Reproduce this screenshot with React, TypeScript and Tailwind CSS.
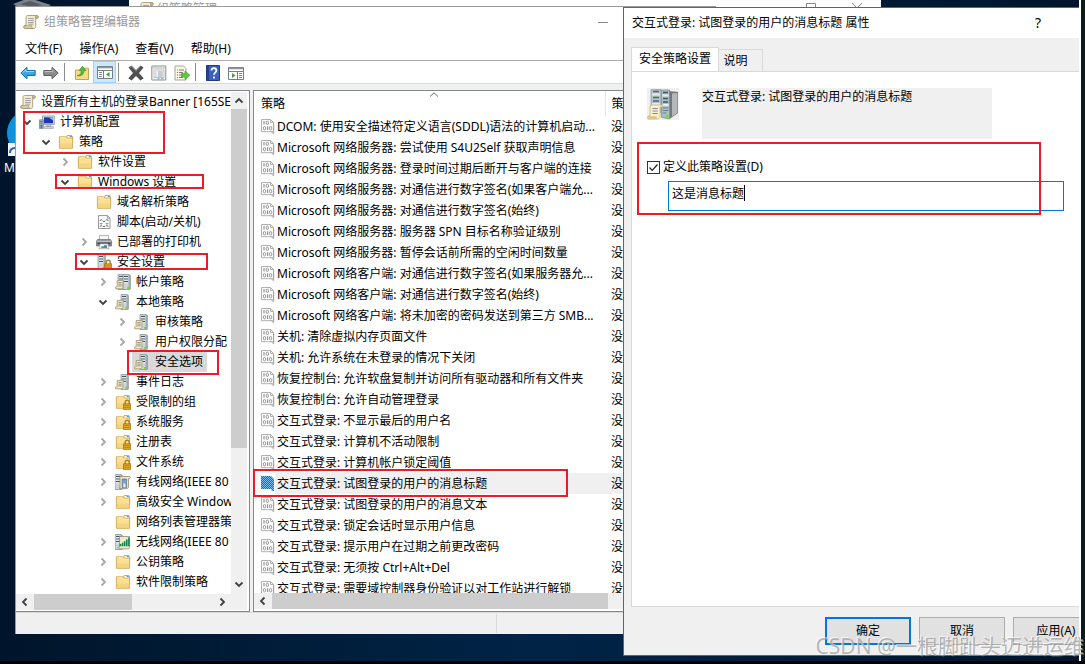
import type { ReactNode } from "react";

type IconName =
  | "folder"
  | "folderLock"
  | "computer"
  | "script"
  | "printer"
  | "serverLock"
  | "server"
  | "servers"
  | "wired"
  | "wireless";

type TreeNode = {
  label: string;
  icon: IconName;
  open?: boolean;
  leaf?: boolean;
  selected?: boolean;
  children?: TreeNode[];
};

const TREE: TreeNode[] = [
  {
    label: "计算机配置",
    icon: "computer",
    open: true,
    children: [
      {
        label: "策略",
        icon: "folder",
        open: true,
        children: [
          { label: "软件设置", icon: "folder" },
          {
            label: "Windows 设置",
            icon: "folder",
            open: true,
            children: [
              { label: "域名解析策略", icon: "folder", leaf: true },
              { label: "脚本(启动/关机)", icon: "script", leaf: true },
              { label: "已部署的打印机", icon: "printer" },
              {
                label: "安全设置",
                icon: "serverLock",
                open: true,
                children: [
                  { label: "帐户策略", icon: "servers" },
                  {
                    label: "本地策略",
                    icon: "server",
                    open: true,
                    children: [
                      { label: "审核策略", icon: "server" },
                      { label: "用户权限分配", icon: "server" },
                      { label: "安全选项", icon: "server", leaf: true, selected: true },
                    ],
                  },
                  { label: "事件日志", icon: "server" },
                  { label: "受限制的组", icon: "folderLock" },
                  { label: "系统服务", icon: "folderLock" },
                  { label: "注册表", icon: "folderLock" },
                  { label: "文件系统", icon: "folderLock" },
                  { label: "有线网络(IEEE 80", icon: "wired" },
                  { label: "高级安全 Window", icon: "folder" },
                  { label: "网络列表管理器策", icon: "folder", leaf: true },
                  { label: "无线网络(IEEE 80", icon: "wireless" },
                  { label: "公钥策略", icon: "folder" },
                  { label: "软件限制策略", icon: "folder" },
                ],
              },
            ],
          },
        ],
      },
    ],
  },
];

const POLICIES = [
  "DCOM: 使用安全描述符定义语言(SDDL)语法的计算机启动...",
  "Microsoft 网络服务器: 尝试使用 S4U2Self 获取声明信息",
  "Microsoft 网络服务器: 登录时间过期后断开与客户端的连接",
  "Microsoft 网络服务器: 对通信进行数字签名(如果客户端允...",
  "Microsoft 网络服务器: 对通信进行数字签名(始终)",
  "Microsoft 网络服务器: 服务器 SPN 目标名称验证级别",
  "Microsoft 网络服务器: 暂停会话前所需的空闲时间数量",
  "Microsoft 网络客户端: 对通信进行数字签名(如果服务器允...",
  "Microsoft 网络客户端: 对通信进行数字签名(始终)",
  "Microsoft 网络客户端: 将未加密的密码发送到第三方 SMB...",
  "关机: 清除虚拟内存页面文件",
  "关机: 允许系统在未登录的情况下关闭",
  "恢复控制台: 允许软盘复制并访问所有驱动器和所有文件夹",
  "恢复控制台: 允许自动管理登录",
  "交互式登录: 不显示最后的用户名",
  "交互式登录: 计算机不活动限制",
  "交互式登录: 计算机帐户锁定阈值",
  "交互式登录: 试图登录的用户的消息标题",
  "交互式登录: 试图登录的用户的消息文本",
  "交互式登录: 锁定会话时显示用户信息",
  "交互式登录: 提示用户在过期之前更改密码",
  "交互式登录: 无须按 Ctrl+Alt+Del",
  "交互式登录: 需要域控制器身份验证以对工作站进行解锁",
];

const SELECTED_POLICY = "交互式登录: 试图登录的用户的消息标题";

function Svg({ children, className = "size-4" }: { children: ReactNode; className?: string }) {
  return (
    <svg viewBox="0 0 16 16" className={`shrink-0 ${className}`} aria-hidden="true">
      {children}
    </svg>
  );
}

function ScrollIcon() {
  return (
    <Svg>
      <path d="M4.5 1.5h9.2c1 0 1.5.8 1.5 1.6 0 .7-.5 1.1-1.2 1.1h-1.3v8.3c0 1.4-.9 2.1-2 2.1H2.6c-1.2 0-2-.7-2-1.7 0-.8.6-1.4 1.4-1.4h1V3.4c0-1 .5-1.9 1.5-1.9z" fill="#f3ebcb" stroke="#a39c82" strokeWidth=".9" />
      <path d="M13.6 1.6c-1 0-1.3.9-1 2.6h1.6c.7 0 1-.6 1-1.2 0-.9-.7-1.4-1.6-1.4z" fill="#cdbf8f" stroke="#8d8467" strokeWidth=".6" />
      <path d="M1.7 11.7h7.2c-.5 1 0 2.6 1.2 2.7H2.6c-2 0-2.3-2.3-.9-2.7z" fill="#ddd0a3" stroke="#8d8467" strokeWidth=".6" />
      <path d="M5.2 4.5h5.6M5.2 6.5h5.6M5.2 8.5h5.6M5.2 10.2h5" stroke="#9a9aa2" strokeWidth=".9" />
    </Svg>
  );
}

function FolderShape() {
  return (
    <>
      <path d="M8 4.500 9.200 1.500h4.600l.8 1v4H8z" fill="#f7e3a4" stroke="#c79b3f" strokeWidth=".8" />
      <path d="M10 2.200h3.500v1.400H10z" fill="#fff" />
      <path d="M11.800 2h2v1.200h-2z" fill="#3f97dd" />
      <path d="M1.400 2.800h6.200l1.600 1.500h5.400v10H1.400z" fill="#fadf94" stroke="#cfa651" strokeWidth=".9" />
      <path d="M1.900 9.500h12.300v4.400H1.900z" fill="#f2cd74" opacity=".6" />
      <path d="M2.200 3.700h5l1.600 1.500h5.200" fill="none" stroke="#fdf1c4" strokeWidth=".8" />
    </>
  );
}

function LockShape() {
  return (
    <>
      <path d="M10.200 10V8.200a2 2 0 0 1 4 0V10" fill="none" stroke="#a98022" strokeWidth="1.4" />
      <path d="M8.500 9.800h7.300v5.700H8.500z" fill="#dda82c" stroke="#9b6d10" strokeWidth=".7" />
      <path d="M9 11.600h6.400M9 13.600h6.400" stroke="#b57f14" strokeWidth=".8" />
    </>
  );
}

function Rack({ x }: { x: number }) {
  return (
    <g transform={`translate(${x} 0)`}>
      <path d="M0 .6h6l1.400.8v13.800L6 15.600H0z" fill="#a3afb6" stroke="#77838b" strokeWidth=".6" />
      <path d="M.5 1h5v14h-5z" fill="#cbd4d9" />
      <path d="M1 2.500h4M1 5h4M1 7.500h4" stroke="#44535c" strokeWidth="1.1" />
      <path d="M1 3.700h4M1 6.200h4M1 8.800h4" stroke="#fff" strokeWidth=".6" />
      <path d="M4.200 13h2v1.800h-2z" fill="#5ae01b" />
    </g>
  );
}

function SheetShape() {
  return (
    <>
      <path d="M2.200 6.500h6.300v1.200H7.900V13c0 1.200-.6 1.800-1.500 1.800H.8c-.8-.6-.5-2 .5-2h.9z" fill="#f5ecc9" stroke="#9d9068" strokeWidth=".8" />
      <path d="M3.300 8.500h3.400M3.300 10.200h3.400M3.300 11.900h3.400" stroke="#7e7b78" strokeWidth=".8" />
    </>
  );
}

function TreeIcon({ name }: { name: IconName }) {
  if (name === "folder") {
    return (
      <Svg>
        <FolderShape />
      </Svg>
    );
  }
  if (name === "folderLock") {
    return (
      <Svg>
        <FolderShape />
        <LockShape />
      </Svg>
    );
  }
  if (name === "computer") {
    return (
      <Svg>
        <path d="M3.500 2h11.800v8.600H3.500z" fill="#d8dce3" stroke="#8b93a0" strokeWidth=".8" />
        <path d="M5 3.300h9v6H5z" fill="#1c35b8" />
        <path d="M9.500 3.300H14v3.200z" fill="#8fb0f0" />
        <path d="M7.500 10.800h4v1.700h-4zM5.500 12.500h8.800v2H5.500z" fill="#cdd2d9" stroke="#8a929c" strokeWidth=".5" />
        <path d="M.5 5.800h3.800v8.700H.5z" fill="#b9c4cd" stroke="#697784" strokeWidth=".7" />
        <path d="M1.200 7.300h2.400M1.200 9h2.400" stroke="#3d5f89" />
        <path d="M1.400 10.500h2v3.400h-2z" fill="#496f9f" />
      </Svg>
    );
  }
  if (name === "script") {
    return (
      <Svg>
        <path d="M2.500 1.500h8.800l2.700 2.700v10.300H2.500z" fill="#fafafa" stroke="#8f8f8f" strokeWidth=".9" />
        <path d="M11.300 1.500v2.700H14" fill="none" stroke="#8f8f8f" strokeWidth=".9" />
        <path d="M4 7c.3-1.600 1.800-1.600 2.400-.6M7 7.300h2M9.700 6.400c.6-1 2.300-1 2.500.6M4 9.200c.4 1 1.800 1 2.400 0M9.700 9.200c.6 1 2.100 1 2.500 0M4 12.600c.4-1.300 1.800-1.300 2.400-.3M7 12.600h2M9.700 12.300c.6-1 2.100-1 2.500.3" fill="none" stroke="#666" />
      </Svg>
    );
  }
  if (name === "printer") {
    return (
      <Svg>
        <path d="M3.500 1.500h9v5h-9z" fill="#f6f6f6" stroke="#999" strokeWidth=".7" />
        <path d="M1.500 5.500h13l1.200 2v4.500H.3V7.500z" fill="#85898d" stroke="#5e6265" strokeWidth=".6" />
        <path d="M1 7.200h14" stroke="#cdd0d2" />
        <path d="M1.500 8.700h13v1.400h-13z" fill="#3e4245" />
        <path d="M4 9.800h8l1 4.900H3z" fill="#fff" stroke="#808080" strokeWidth=".6" />
        <path d="M8 11.200h3v2.800H8z" fill="#3f88cf" />
        <path d="M5.200 12.200H8V14H5.200z" fill="#3fae57" />
      </Svg>
    );
  }
  if (name === "serverLock") {
    return (
      <Svg>
        <Rack x={2} />
        <LockShape />
      </Svg>
    );
  }
  if (name === "servers") {
    return (
      <Svg>
        <Rack x={3} />
        <Rack x={8} />
        <SheetShape />
      </Svg>
    );
  }
  if (name === "wired") {
    return (
      <Svg>
        <Rack x={0} />
        <path d="M5 2.500h9.300c1.500 0 1.500 2 0 2.200h-.8v8c0 1.200-.8 2-1.800 2H5z" fill="#efe9d0" stroke="#908a72" strokeWidth=".8" />
        <path d="M7.200 5h4.400v8.800H7.200z" fill="#7d9fcd" stroke="#455f87" strokeWidth=".6" />
        <path d="M8.300 9.500h2.200v3.800H8.300z" fill="#e3ecf7" />
      </Svg>
    );
  }
  if (name === "wireless") {
    return (
      <Svg>
        <Rack x={0} />
        <path d="M4.500 2.500h10v10.700c0 1-.6 1.600-1.600 1.600H3.400c-1-.5-.6-1.700.3-1.700h.8z" fill="#efe9d0" stroke="#908a72" strokeWidth=".8" />
        <path d="M5.500 12.200V10M7.600 12.200V8.800M9.700 12.200V7.200M11.800 12.200V5.400M13.900 12.200V3.400" stroke="#12854a" strokeWidth="1.6" />
      </Svg>
    );
  }
  return (
    <Svg>
      <Rack x={6} />
      <SheetShape />
    </Svg>
  );
}

function PolicyIcon({ selected }: { selected: boolean }) {
  return (
    <svg viewBox="0 0 14 15" className="h-[15px] w-[14px] shrink-0" aria-hidden="true">
      {selected ? (
        <>
          <defs>
            <pattern id="dither" width="2" height="2" patternUnits="userSpaceOnUse">
              <path d="M0 0h2v2H0z" fill="#7dbdea" />
              <path d="M0 0h1v1H0zM1 1h1v1H1z" fill="#0670c4" />
            </pattern>
          </defs>
          <path d="M0 0h10l3 3v12h-2l-1-2H0z" fill="url(#dither)" />
        </>
      ) : (
        <>
          <path d="M.5.500h9l3 3v9.200H.5z" fill="#fcfcfc" stroke="#b0b0b0" />
          <path d="M9.500.500v3h3" fill="none" stroke="#b0b0b0" />
          <path d="M9.500 12.500c1.500 0 1.500 1.900 3.200 1.900V5" fill="none" stroke="#a3a3a3" />
          <path d="M3 2v3.600M6.600 7.300V11" stroke="#979797" strokeWidth="1.2" fill="none" />
          <ellipse cx="6.300" cy="3.800" rx="1.200" ry="1.700" fill="none" stroke="#979797" />
          <ellipse cx="3.500" cy="9.200" rx="1.200" ry="1.700" fill="none" stroke="#979797" />
          <ellipse cx="9.600" cy="9.200" rx="1.200" ry="1.700" fill="none" stroke="#979797" />
        </>
      )}
    </svg>
  );
}

function Chevron({ dir, className = "text-[#404040]" }: { dir: "up" | "down" | "left" | "right"; className?: string }) {
  const paths = {
    up: "M1.500 6.500 5 3l3.500 3.500",
    down: "M1.500 3.500 5 7l3.500-3.500",
    left: "M6.500 1.500 3 5l3.500 3.500",
    right: "M3.500 1.500 7 5 3.500 8.500",
  };
  return (
    <svg viewBox="0 0 10 10" className={`size-[10px] shrink-0 ${className}`} aria-hidden="true">
      <path d={paths[dir]} fill="none" stroke="currentColor" strokeWidth="1.8" />
    </svg>
  );
}

function TreeBranch({ nodes, className }: { nodes: TreeNode[]; className: string }) {
  return (
    <ul className={className}>
      {nodes.map((node) => (
        <li key={node.label}>
          <div className="flex h-5 items-center">
            {node.leaf ? (
              <span className="w-4 shrink-0" />
            ) : (
              <button aria-label={`展开 ${node.label}`} className="flex w-4 shrink-0 justify-center">
                <Chevron
                  dir={node.open ? "down" : "right"}
                  className={node.open ? "text-[#404040]" : "text-[#a6a6a6]"}
                />
              </button>
            )}
            <span
              className={`ml-[2px] flex h-5 items-center gap-[5px] pr-1 pl-[2px] whitespace-nowrap ${
                node.selected ? "bg-[#d9d9d9]" : ""
              }`}
            >
              <TreeIcon name={node.icon} />
              {node.label}
            </span>
          </div>
          {node.children && <TreeBranch nodes={node.children} className="pl-[19px]" />}
        </li>
      ))}
    </ul>
  );
}

function ToolButton({ label, active, children }: { label: string; active?: boolean; children: ReactNode }) {
  return (
    <button
      aria-label={label}
      className={`flex h-[22px] w-[23px] items-center justify-center ${
        active ? "border border-[#99d1ff] bg-[#cce8ff]" : "pt-px"
      }`}
    >
      {children}
    </button>
  );
}

function Divider() {
  return <span className="mr-[5px] ml-[2px] h-[18px] w-px bg-[#8c8c8c]" />;
}

function Toolbar() {
  return (
    <div className="flex h-[23px] items-center border-b border-[#d9d9d9] bg-white">
      <ToolButton label="后退">
        <Svg>
          <path d="M.800 8 7 2.300v3.200h8.200v5H7v3.200z" fill="#37a5e6" stroke="#1770ae" />
          <path d="M2.500 7.800 6 4.600v2h8.200" fill="none" stroke="#a5dcf8" />
        </Svg>
      </ToolButton>
      <ToolButton label="前进">
        <Svg>
          <path d="M15.200 8 9 2.300v3.200H.800v5H9v3.200z" fill="#8d8d8d" stroke="#5e5e5e" />
          <path d="M1.600 6.600h8.200v-2" fill="none" stroke="#c6c6c6" />
        </Svg>
      </ToolButton>
      <Divider />
      <ToolButton label="向上一级">
        <Svg>
          <path d="M1.500 5h6l1-1.800h6v11.300h-13z" fill="#f8d985" stroke="#c7a458" />
          <path d="M3 10.500c3 0 4.300-1.600 4.300-5H5.200L8.400 1.200l3.600 4.300h-2c0 4-2.700 6-7 5z" fill="#4cc13c" stroke="#2a8b24" strokeWidth=".6" />
        </Svg>
      </ToolButton>
      <ToolButton label="显示/隐藏控制台树" active>
        <PanelIcon side="left" />
      </ToolButton>
      <Divider />
      <ToolButton label="删除">
        <Svg>
          <path d="M.500 2.600 3.500.500 8 5l4.500-4.500 3 2.100L11 8l4.700 5.200-3.200 2.300L8 11l-4.500 4.500-3.200-2.300L5 8z" fill="#505050" />
          <path d="m2 2.600 1.500-1L8 6.200l4.500-4.600" fill="none" stroke="#8a8a8a" strokeWidth=".8" />
        </Svg>
      </ToolButton>
      <ToolButton label="属性">
        <Svg>
          <path d="M.8 1h14v14H.8z" fill="#f7f7f7" stroke="#8f8f8f" />
          <path d="M1.500 3h12.600" stroke="#b5b5b5" />
          <path d="M3 5h10v7.500H3z" fill="#fff" stroke="#b3b3b3" strokeWidth=".8" />
          <path d="M4.300 7h1.200M6.800 7h5M4.300 9h1.200M6.800 9h5M4.300 11h1.200M6.800 11h5" stroke="#8d9aa6" />
          <path d="M6.500 13.800h2M10 13.800h2.500" stroke="#55a7d6" />
        </Svg>
      </ToolButton>
      <ToolButton label="导出列表">
        <Svg>
          <path d="M1 1h8.500L12 3.500V15H1z" fill="#fcf7e4" stroke="#a9a593" />
          <path d="M3 5h1M5 5h5M3 7.500h1M5 7.500h4M3 10h1M5 10h4M3 12.500h1M5 12.500h4" stroke="#7c7c7c" />
          <path d="M7.500 8.500H11V6l5 4.300-5 4.200V12H7.500z" fill="#5fcb3a" stroke="#399a20" strokeWidth=".6" />
        </Svg>
      </ToolButton>
      <Divider />
      <ToolButton label="帮助">
        <Svg>
          <path d="M1.500.500h13v15h-13z" fill="#3c60bd" stroke="#24387f" />
          <path d="M1.500.500H4v15H1.500z" fill="#24408f" />
          <path d="M6.400 5.600c0-3.400 5-3.400 5 0 0 2-2.400 2-2.400 4.200M9 11.600v2" fill="none" stroke="#fff" strokeWidth="1.8" />
        </Svg>
      </ToolButton>
      <ToolButton label="显示/隐藏操作窗格">
        <PanelIcon side="right" />
      </ToolButton>
    </div>
  );
}

function PanelIcon({ side }: { side: "left" | "right" }) {
  return (
    <Svg>
      <path d="M.5 2.500h15v12H.5z" fill="#fff" stroke="#777f86" />
      <path d="M1 3.500h14" stroke="#8e979e" strokeWidth="1.6" />
      <path d="M1 6.500h14" stroke="#777f86" />
      {side === "left" ? (
        <>
          <path d="M6.500 6.500v8" stroke="#777f86" />
          <path d="M2 8.500h3M2 10.500h3M2 12.500h3" stroke="#7d8b98" />
          <path d="M12.500 8v5L9 10.500z" fill="#3da23a" />
        </>
      ) : (
        <>
          <path d="M9.500 6.500v8" stroke="#777f86" />
          <path d="M11 8.500h3M11 10.500h3M11 12.500h3" stroke="#7d8b98" />
          <path d="M4 8v5l3.500-2.500z" fill="#3da23a" />
        </>
      )}
    </Svg>
  );
}

function ConsoleTree() {
  return (
    <div className="flex w-[234px] shrink-0 flex-col border border-l-0 border-[#828790] bg-white py-px pr-[2px]">
      <div className="flex min-h-0 flex-1">
        <div className="min-w-0 flex-1 overflow-hidden">
          <div className="flex h-5 items-center gap-[5px] pl-1 whitespace-nowrap">
            <ScrollIcon />
            设置所有主机的登录Banner [165SE
          </div>
          <TreeBranch nodes={TREE} className="pl-[3px]" />
        </div>
        <div className="flex w-4 shrink-0 flex-col items-center bg-[#f0f0f0]">
          <button aria-label="向上滚动" className="flex h-[17px] items-center">
            <Chevron dir="up" />
          </button>
          <div className="w-full flex-1">
            <div className="h-[73%] bg-[#cdcdcd]" />
          </div>
          <button aria-label="向下滚动" className="flex h-5 items-center">
            <Chevron dir="down" />
          </button>
        </div>
      </div>
      <div className="flex h-4 shrink-0 items-center bg-[#f0f0f0]">
        <button aria-label="向左滚动" className="flex w-[18px] justify-center">
          <Chevron dir="left" />
        </button>
        <div className="h-full flex-1">
          <div className="h-full w-[55%] bg-[#cdcdcd]" />
        </div>
        <button aria-label="向右滚动" className="mr-4 flex w-[18px] justify-center">
          <Chevron dir="right" />
        </button>
      </div>
    </div>
  );
}

function PolicyList() {
  return (
    <div className="ml-[3px] flex min-w-0 flex-1 flex-col border border-[#828790] bg-white pb-[2px]">
      <div className="min-h-0 flex-1 overflow-hidden">
        <table className="w-full table-fixed border-collapse text-left">
          <thead>
            <tr className="h-[25px]">
              <th className="relative w-[351px] p-0 pl-[7px] font-normal">
                策略
                <svg viewBox="0 0 10 5" className="absolute top-px left-1/2 h-[5px] w-[10px]" aria-hidden="true">
                  <path d="M1 4.500 5 .800l4 3.700" fill="none" stroke="#6d6d6d" />
                </svg>
              </th>
              <th className="border-l border-[#e5e5e5] p-0 pl-[6px] font-normal">策</th>
            </tr>
          </thead>
          <tbody>
            {POLICIES.map((name) => {
              const selected = name === SELECTED_POLICY;
              return (
                <tr key={name} className="h-[21px]">
                  <td className="p-0 pl-[7px]">
                    <div className="flex h-[21px] items-center">
                      <PolicyIcon selected={selected} />
                      <span
                        className={`flex h-[21px] flex-1 items-center pl-[2px] whitespace-nowrap ${
                          selected ? "bg-[#f0f0f0]" : ""
                        }`}
                      >
                        {name}
                      </span>
                    </div>
                  </td>
                  <td className={`p-0 pl-[6px] ${selected ? "bg-[#f0f0f0]" : ""}`}>没</td>
                </tr>
              );
            })}
          </tbody>
        </table>
      </div>
      <div className="flex h-4 shrink-0 items-center bg-[#f0f0f0]">
        <button aria-label="向左滚动列表" className="flex w-[18px] justify-center">
          <Chevron dir="left" />
        </button>
        <div className="h-full w-[336px] bg-[#cdcdcd]" />
      </div>
    </div>
  );
}

function EditorWindow() {
  return (
    <section className="absolute top-[6px] right-[34%] bottom-[30px] left-[15px] flex flex-col border-t border-l border-[#9a9a9a] bg-[#f0f0f0]">
      <header className="flex h-[30px] items-center bg-white pl-[7px] text-[#999]">
        <ScrollIcon />
        <h1 className="ml-[5px] flex-1">组策略管理编辑器</h1>
        <button aria-label="最小化" className="mr-[90px] flex w-[46px] justify-center">
          <span className="h-px w-[10px] bg-[#888]" />
        </button>
      </header>
      <nav className="flex h-6 items-center gap-[17px] border-b border-[#b0b0b0] bg-white pl-[9px]">
        <button>文件(F)</button>
        <button>操作(A)</button>
        <button>查看(V)</button>
        <button>帮助(H)</button>
      </nav>
      <Toolbar />
      <main className="mt-[6px] flex min-h-0 flex-1">
        <ConsoleTree />
        <PolicyList />
      </main>
      <footer className="flex h-[22px] shrink-0 border-t border-[#d9d9d9] py-px">
        <span className="w-[481px] border-r border-[#d9d9d9]" />
      </footer>
    </section>
  );
}

function ServersIcon() {
  return (
    <svg viewBox="0 0 32 32" className="size-8 shrink-0 bg-[#f0f0f0]" aria-hidden="true">
      <path d="M4 1.500h10v23H4z" fill="#b7c4c8" stroke="#8b9a9f" strokeWidth=".7" />
      <path d="M6 3.500h6M6 9.500h6M6 13h6" stroke="#4b6670" strokeWidth="1.4" />
      <path d="M5 6.500h8M5 16h8" stroke="#dfe9ed" strokeWidth="1.8" />
      <path d="M22 3 31 4v21l-8.500 6z" fill="#72797d" />
      <path d="M25 5.500 30.500 5v19.500l-5.500 4z" fill="#b4b8ba" />
      <path d="M14.500 2h8v29l-8-1.500z" fill="#aebfc5" stroke="#76888f" strokeWidth=".7" />
      <path d="M16 4.500h5M16 10.500h5M16 14h5" stroke="#3c5560" strokeWidth="1.500" />
      <path d="M15.500 7.500h6M15.500 17h6" stroke="#e5eef1" strokeWidth="1.8" />
      <path d="M15.500 20h6M15.500 22.500h6M15.500 25h4" stroke="#6b8394" strokeWidth="1.1" />
      <path d="M18.500 27h3v2.500h-3z" fill="#65e51b" />
      <path d="M4 17h11.500v2H13v9c0 2-1 3-2.500 3H1.500C-.3 30.500.2 28 1.800 28H3V19z" fill="#f9f0cf" stroke="#c5b27a" strokeWidth=".8" />
      <path d="M1.600 28.200h8.200c-.5 1.500 0 2.600 1 2.600H1.500c-1.200-.3-1-2.300.1-2.600z" fill="#dcc27e" />
      <path d="M5.500 20.500h5.300M5.500 23h5.300M5.500 25.500h5.300" stroke="#8a83a0" />
    </svg>
  );
}

function PropertiesDialog() {
  return (
    <section className="absolute top-[7px] right-[6px] bottom-2 left-[623px] flex flex-col overflow-hidden border border-r-0 border-[#1878c8] bg-[#f0f0f0]">
      <header className="flex h-[30px] shrink-0 items-center bg-white pl-2">
        <h2 className="flex-1 whitespace-nowrap">交互式登录: 试图登录的用户的消息标题 属性</h2>
        <button aria-label="帮助主题" className="w-[46px] text-sm">
          ?
        </button>
        <button aria-label="关闭" className="-mr-7 flex w-[46px] justify-center">
          <svg viewBox="0 0 12 12" className="size-3" aria-hidden="true">
            <path d="m1 1 10 10M11 1 1 11" stroke="#000" />
          </svg>
        </button>
      </header>
      <div className="mt-[9px] ml-[7px] flex shrink-0 items-end">
        <button className="-mb-px h-[25px] w-[88px] border border-b-0 border-[#d9d9d9] bg-white pb-[2px]">
          安全策略设置
        </button>
        <button className="h-[22px] w-[44px] border border-b-0 border-l-0 border-[#d9d9d9] pr-[10px]">说明</button>
      </div>
      <div className="ml-[7px] min-h-0 flex-1 border border-r-0 border-[#d9d9d9] bg-white pt-4 pl-[15px]">
        <div className="flex gap-[23px]">
          <ServersIcon />
          <p className="h-[51px] max-w-[290px] flex-1 bg-[#f0f0f0] leading-[18px]">{SELECTED_POLICY}</p>
        </div>
        <label className="mt-[18px] flex h-5 items-center gap-[3px]">
          <span className="relative flex size-[13px]">
            <input type="checkbox" defaultChecked className="size-[13px] appearance-none border border-[#333] bg-white" />
            <svg viewBox="0 0 13 13" className="pointer-events-none absolute inset-0" aria-hidden="true">
              <path d="m2.500 6.500 2.700 2.800 5.300-5.800" fill="none" stroke="#222" strokeWidth="1.2" />
            </svg>
          </span>
          定义此策略设置(D)
        </label>
        <div className="relative mt-1 mr-[15px] ml-[21px]">
          <input
            type="text"
            aria-label="消息标题"
            defaultValue="这是消息标题"
            className="h-[30px] w-full border border-[#0078d7] bg-white pb-[6px] pl-[3px] outline-none"
          />
          <span className="absolute top-1 left-[76px] h-4 w-px bg-black" />
        </div>
      </div>
      <footer className="-mr-5 flex shrink-0 justify-end gap-2 py-[10px]">
        <button className="h-7 w-[86px] border-2 border-[#0078d7] bg-[#e1e1e1]">确定</button>
        <button className="h-7 w-[86px] border border-[#adadad] bg-[#e1e1e1]">取消</button>
        <button className="h-7 w-[86px] border border-[#adadad] bg-[#e1e1e1]">应用(A)</button>
      </footer>
    </section>
  );
}

function DesktopIcons() {
  return (
    <div className="absolute top-0 left-0 text-white">
      <svg viewBox="0 0 52 180" className="h-[180px] w-[52px]" aria-hidden="true">
        <path d="M13 4 29-2l22 7-6 3H20z" fill="#7c8288" />
        <path d="M20 4 30 1l12 4-10 2z" fill="#555b61" />
        <circle cx="30" cy="133" r="23" fill="#1192dc" />
        <path d="M8 143h12v13H8z" fill="#f2f4f7" />
        <path d="M10 153c0-4 2-5 5-5" fill="none" stroke="#2a5ca8" strokeWidth="2" />
      </svg>
      <span className="absolute top-[158px] left-1">M</span>
    </div>
  );
}

function BackWindow() {
  return (
    <section className="absolute top-0 right-[204px] left-[129px] flex h-[18px] items-center bg-white pl-[9px] text-[#999]">
      <ScrollIcon />
      <span className="ml-[3px] flex-1">组策略管理</span>
      <svg viewBox="0 0 70 16" className="mr-3 h-4 w-[70px]" fill="none" stroke="#888" aria-hidden="true">
        <path d="M7.500 2.500h9v9h-9zM53 2l10 10M63 2 53 12" />
      </svg>
    </section>
  );
}

/* red boxes that call out the steps */
const MARKS = [
  "top-[111px] left-[23px] h-[43px] w-[142px]",
  "top-[174px] left-[55px] h-[15px] w-[149px]",
  "top-[253px] left-[75px] h-[17px] w-[133px]",
  "top-[350px] left-[127px] h-[25px] w-[92px]",
  "top-[469px] left-[253px] h-[28px] w-[315px]",
  "top-[142px] left-[637px] h-[73px] w-[404px]",
];

export default function App() {
  return (
    <div className="relative h-screen overflow-hidden bg-gradient-to-r from-[#00152b] via-[#002447] to-[#00152b] font-['Noto_Sans','Noto_Sans_CJK_SC',sans-serif] text-xs leading-5 text-black">
      <DesktopIcons />
      <BackWindow />
      <EditorWindow />
      <div className="absolute inset-y-0 right-0 w-[6px] border-l-2 border-white bg-[#0b1a1a]" />
      <PropertiesDialog />
      <div className="absolute inset-x-0 bottom-0 h-[3px] bg-black" />
      {MARKS.map((mark) => (
        <div key={mark} className={`pointer-events-none absolute border-2 border-[#ed1c24] ${mark}`} />
      ))}
      <div className="pointer-events-none absolute right-0 bottom-1 text-[21px] leading-7 whitespace-nowrap text-[#8c8c8c]/60 [text-shadow:-1px_-1px_0_#ffffffb0]">
        CSDN @一根脚趾头迈进运维
      </div>
    </div>
  );
}
